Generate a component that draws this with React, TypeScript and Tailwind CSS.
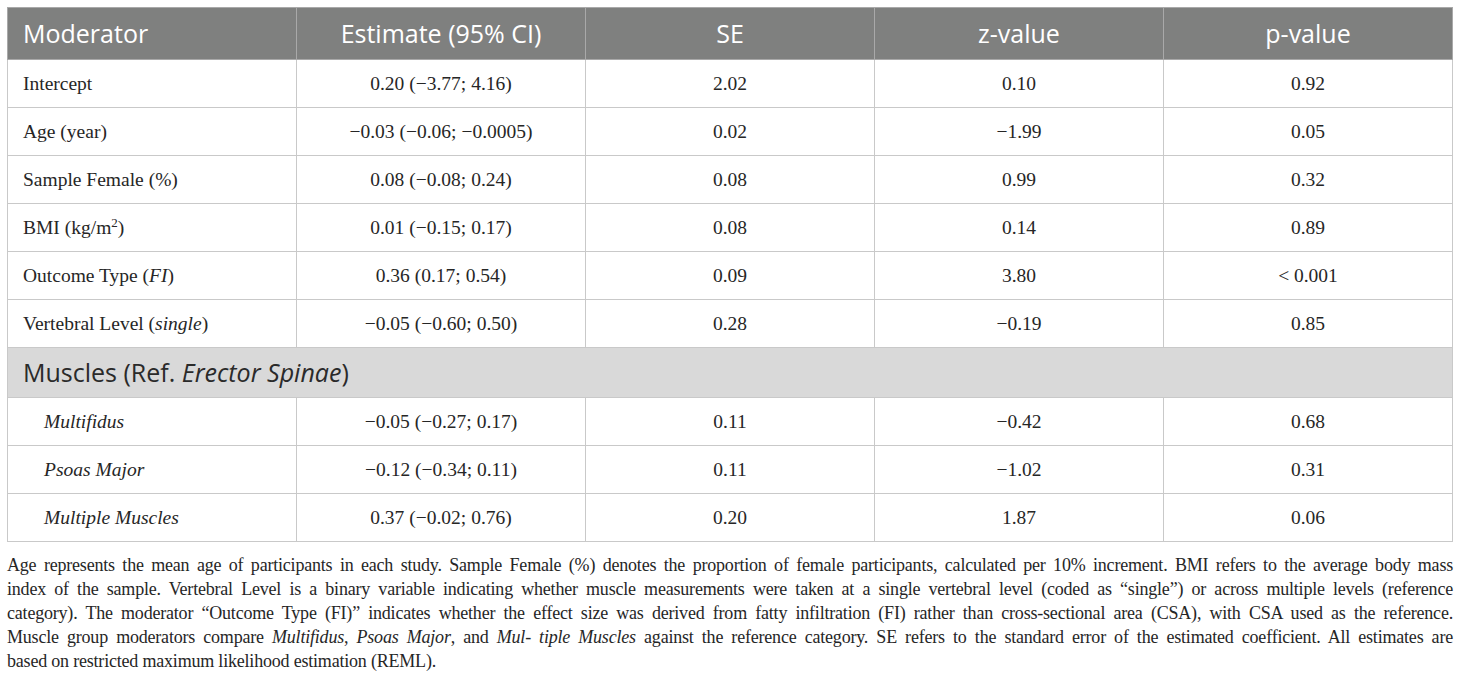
export default function App() {
  const rows: { label: React.ReactNode; est: string; se: string; z: string; p: string }[] = [
    { label: 'Intercept', est: '0.20 (−3.77; 4.16)', se: '2.02', z: '0.10', p: '0.92' },
    { label: 'Age (year)', est: '−0.03 (−0.06; −0.0005)', se: '0.02', z: '−1.99', p: '0.05' },
    { label: 'Sample Female (%)', est: '0.08 (−0.08; 0.24)', se: '0.08', z: '0.99', p: '0.32' },
    {
      label: (
        <>
          BMI (kg/m<sup className="text-[13px]">2</sup>)
        </>
      ),
      est: '0.01 (−0.15; 0.17)',
      se: '0.08',
      z: '0.14',
      p: '0.89',
    },
    {
      label: (
        <>
          Outcome Type (<i>FI</i>)
        </>
      ),
      est: '0.36 (0.17; 0.54)',
      se: '0.09',
      z: '3.80',
      p: '< 0.001',
    },
    {
      label: (
        <>
          Vertebral Level (<i>single</i>)
        </>
      ),
      est: '−0.05 (−0.60; 0.50)',
      se: '0.28',
      z: '−0.19',
      p: '0.85',
    },
  ];

  const muscles = [
    { label: 'Multifidus', est: '−0.05 (−0.27; 0.17)', se: '0.11', z: '−0.42', p: '0.68' },
    { label: 'Psoas Major', est: '−0.12 (−0.34; 0.11)', se: '0.11', z: '−1.02', p: '0.31' },
    { label: 'Multiple Muscles', est: '0.37 (−0.02; 0.76)', se: '0.20', z: '1.87', p: '0.06' },
  ];

  const cell = 'border border-[#c9c9c9] text-center';
  const headCell = 'border border-[#a9a9a9] font-normal text-center';

  const notes = [
    'Age represents the mean age of participants in each study. Sample Female (%) denotes the proportion of female participants, calculated per 10% increment. BMI refers to the average body mass',
    'index of the sample. Vertebral Level is a binary variable indicating whether muscle measurements were taken at a single vertebral level (coded as “single”) or across multiple levels (reference',
    'category). The moderator “Outcome Type (FI)” indicates whether the effect size was derived from fatty infiltration (FI) rather than cross-sectional area (CSA), with CSA used as the reference.',
  ];

  return (
    <div className="bg-white w-[1460px] h-[678px] pt-[7px] px-[7px] text-[#262626]">
      <table className="w-[1446px] table-fixed border-collapse font-['Liberation_Serif',serif] text-[19.5px]">
        <thead>
          <tr className="h-[52px] bg-[#7f807f] text-white font-['Open_Sans',sans-serif] text-[25px]">
            <th className={`${headCell} text-left pl-[15px]`}>Moderator</th>
            <th className={headCell}>Estimate (95% CI)</th>
            <th className={headCell}>SE</th>
            <th className={headCell}>z-value</th>
            <th className={headCell}>p-value</th>
          </tr>
        </thead>
        <tbody>
          {rows.map((r, i) => (
            <tr key={i} className="h-[48px]">
              <td className={`${cell} text-left pl-[15px]`}>{r.label}</td>
              <td className={cell}>{r.est}</td>
              <td className={cell}>{r.se}</td>
              <td className={cell}>{r.z}</td>
              <td className={cell}>{r.p}</td>
            </tr>
          ))}
          <tr className="h-[50px] bg-[#d9d9d9]">
            <td colSpan={5} className="border border-[#c9c9c9] text-left pl-[15px] font-['Open_Sans',sans-serif] text-[25px] text-[#2a2a2a]">
              Muscles (Ref. <i>Erector Spinae</i>)
            </td>
          </tr>
          {muscles.map((r) => (
            <tr key={r.label} className="h-[48px]">
              <td className={`${cell} text-left pl-[36px]`}>
                <i>{r.label}</i>
              </td>
              <td className={cell}>{r.est}</td>
              <td className={cell}>{r.se}</td>
              <td className={cell}>{r.z}</td>
              <td className={cell}>{r.p}</td>
            </tr>
          ))}
        </tbody>
      </table>

      <div className="mt-[11px] w-[1446px] font-['Liberation_Serif',serif] text-[18px] tracking-[-0.2px] leading-[24px] text-[#262626]">
        {notes.map((n, i) => (
          <div key={i} className="text-justify [text-align-last:justify]">
            {n}
          </div>
        ))}
        <div className="text-justify [text-align-last:justify]">
          Muscle group moderators compare <i>Multifidus</i>, <i>Psoas Major</i>, and <i>Mul- tiple Muscles</i> against the
          reference category. SE refers to the standard error of the estimated coefficient. All estimates are
        </div>
        <div>based on restricted maximum likelihood estimation (REML).</div>
      </div>
    </div>
  );
}
